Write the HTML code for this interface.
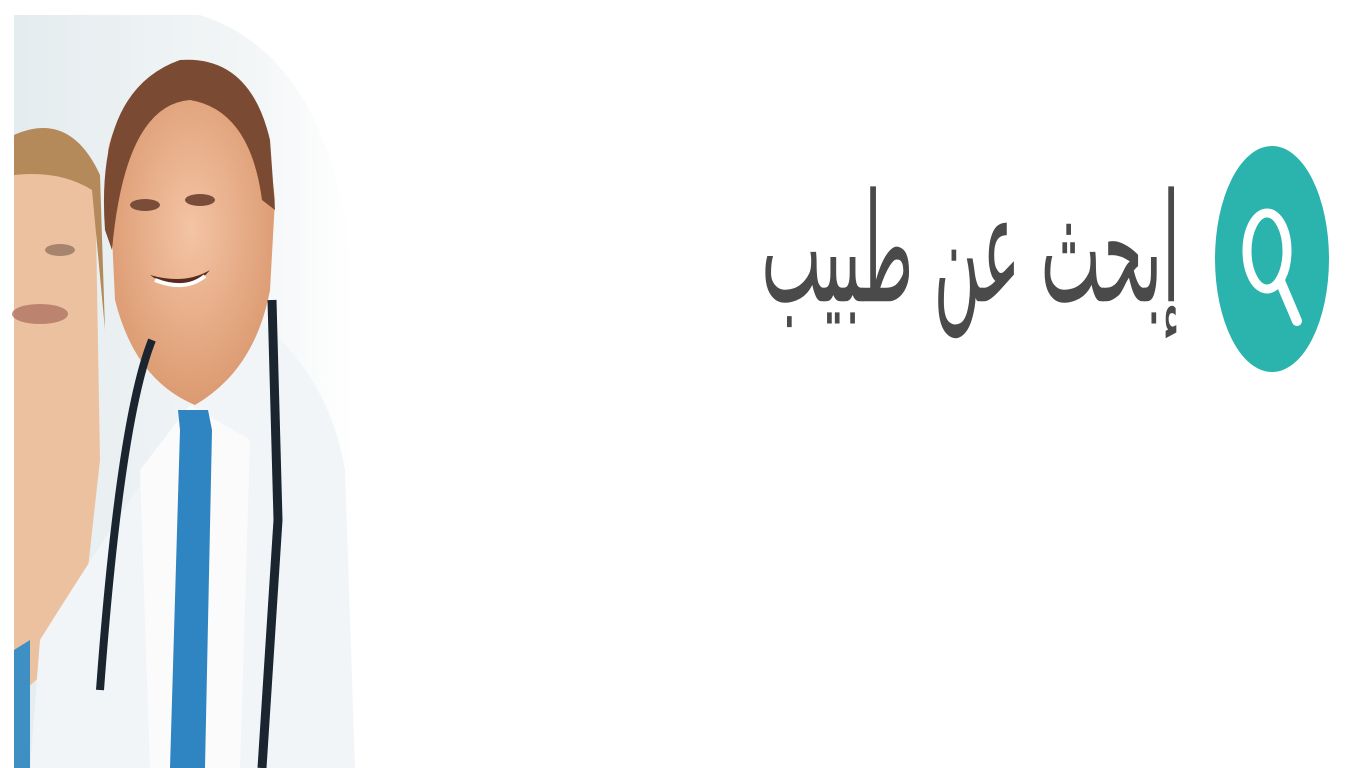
<!DOCTYPE html>
<html><head><meta charset="utf-8"><style>
html,body{margin:0;padding:0;background:#fff;width:1366px;height:768px;overflow:hidden;position:relative}
.circ{position:absolute;left:1215px;top:146px;width:114px;height:226px;border-radius:50%;background:#2bb3ad}
.txt{position:absolute;left:540px;top:150px;width:640px;height:200px;font-family:"DejaVu Sans",sans-serif;color:#4a4a4a;font-size:112px;line-height:200px;direction:rtl;text-align:right;transform:scale(0.57,1.35);transform-origin:right center;white-space:nowrap}
</style></head><body>
<svg style="position:absolute;left:0;top:0" width="380" height="768" viewBox="0 0 380 768">
<defs>
<linearGradient id="bg" x1="0" y1="0" x2="1" y2="0"><stop offset="0" stop-color="#e4ecef"/><stop offset="0.7" stop-color="#f3f6f7"/><stop offset="1" stop-color="#fff"/></linearGradient>
<radialGradient id="sk" cx="0.5" cy="0.45" r="0.6"><stop offset="0" stop-color="#f4c4a4"/><stop offset="1" stop-color="#d9966c"/></radialGradient>
</defs>
<path d="M14 15 H200 Q340 60 355 300 V768 H14Z" fill="url(#bg)"/>
<path d="M14 140 Q60 120 95 170 L100 460 L80 640 L14 700Z" fill="#ecc1a0"/>
<path d="M14 135 Q70 110 100 175 L105 330 L92 190 Q60 170 14 175Z" fill="#b48a5a"/>
<ellipse cx="40" cy="314" rx="28" ry="10" fill="#a8685a" opacity=".7"/>
<ellipse cx="60" cy="250" rx="15" ry="6" fill="#8a6a58" opacity=".7"/>
<path d="M14 650 L30 640 L30 768 L14 768Z" fill="#3d8fc4"/>
<path d="M30 768 L40 640 Q90 560 150 470 L190 410 L260 320 Q330 380 345 470 L355 768Z" fill="#f2f5f8"/>
<path d="M140 470 L190 405 L250 440 L240 768 L150 768Z" fill="#fbfbfc"/>
<path d="M108 150 Q120 90 190 85 Q265 90 275 200 L270 290 Q255 370 195 405 Q135 380 115 300Z" fill="url(#sk)"/>
<path d="M105 230 Q95 90 180 60 Q250 55 270 140 L275 210 L262 200 Q250 110 190 100 Q125 105 112 250Z" fill="#7a4a32"/>
<ellipse cx="145" cy="205" rx="15" ry="6" fill="#7a4d3a"/>
<ellipse cx="200" cy="200" rx="15" ry="6" fill="#7a4d3a"/>
<path d="M150 275 Q185 300 210 270 Q185 285 150 275Z" fill="#5a2a20"/>
<path d="M155 280 Q185 292 205 276" stroke="#fff" stroke-width="4" fill="none"/>
<path d="M178 410 L208 410 L212 430 L205 768 L170 768 L180 430Z" fill="#2f84c2"/>
<path d="M152 340 Q120 420 100 690" stroke="#1b2530" stroke-width="8" fill="none"/>
<path d="M272 300 L278 520 L262 768" stroke="#1b2530" stroke-width="9" fill="none"/>
</svg>
<div class="txt">إبحث عن طبيب</div>
<div class="circ"></div>
<svg style="position:absolute;left:1215px;top:146px" width="114" height="226" viewBox="0 0 114 226">
<ellipse cx="52" cy="105" rx="20" ry="38" fill="none" stroke="#fff" stroke-width="9"/>
<path d="M65 135 L82 175" stroke="#fff" stroke-width="10" stroke-linecap="round"/>
</svg>
</body></html>
